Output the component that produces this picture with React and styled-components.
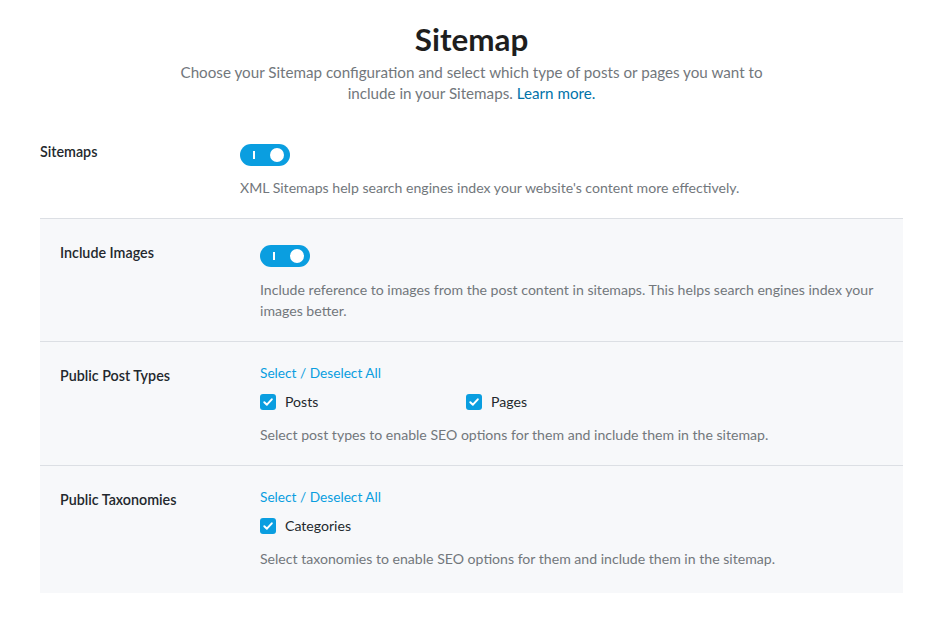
import React from "react";
import styled, { createGlobalStyle } from "styled-components";

const GlobalStyle = createGlobalStyle`
  body {
    margin: 0;
    background: #ffffff;
    font-family: "Segoe UI", "Lato", "Open Sans", sans-serif;
    color: #23282d;
  }
`;

const Page = styled.div`
  width: 863px;
  padding: 0 36px 0 40px;
`;

const Header = styled.div`
  text-align: center;
  padding-top: 21px;
  margin-bottom: 35px;
`;

const Title = styled.h1`
  margin: 0;
  font-size: 31.4px;
  font-weight: 700;
  line-height: 36px;
  color: #1e1e1e;
`;

const Lead = styled.p`
  margin: 5px auto 0;
  width: 620px;
  font-size: 15.2px;
  line-height: 21px;
  color: #72777c;
`;

const Link = styled.a`
  color: #0073aa;
  text-decoration: none;
`;

const Row = styled.div`
  display: grid;
  grid-template-columns: 200px 1fr;
  padding: ${(p) => (p.$inset ? `21px 20px ${p.$last ? "24px" : "20px"}` : "0 0 20px")};
  border-bottom: ${(p) => (p.$last ? "none" : "1px solid #dcdfe4")};
`;

const Panel = styled.div`
  background: #f7f8fa;
`;

const Label = styled.div`
  font-size: 14.3px;
  font-weight: 600;
  line-height: 20px;
  padding-top: 3px;
  color: #23282d;
`;

const Control = styled.div`
  display: flex;
  flex-direction: column;
  align-items: flex-start;
`;

const Toggle = styled.span`
  position: relative;
  display: inline-block;
  width: 50px;
  height: 22px;
  margin-top: 5px;
  border-radius: 11px;
  background: #0a9ee0;
  &::before {
    content: "";
    position: absolute;
    left: 13px;
    top: 7px;
    width: 2px;
    height: 8px;
    background: #fff;
  }
  &::after {
    content: "";
    position: absolute;
    right: 6px;
    top: 4px;
    width: 14px;
    height: 14px;
    border-radius: 50%;
    background: #fff;
  }
`;

const Help = styled.p`
  margin: ${(p) => p.$top || "12px"} 0 0;
  font-size: 14.1px;
  line-height: 21px;
  color: #72777c;
`;

const SelectAll = styled.a`
  font-size: 13.7px;
  line-height: 20px;
  color: #0a9ee0;
  text-decoration: none;
`;

const Checks = styled.div`
  display: grid;
  grid-template-columns: 206px auto;
  margin-top: 9px;
`;

const Check = styled.label`
  display: flex;
  align-items: center;
  gap: 9px;
  font-size: 14.1px;
  line-height: 20px;
  color: #23282d;
`;

const Box = styled.span`
  display: inline-flex;
  align-items: center;
  justify-content: center;
  width: 16px;
  height: 16px;
  border-radius: 3px;
  background: #0a9ee0;
`;

const Tick = () => (
  <Box>
    <svg width="12" height="12" viewBox="0 0 12 12">
      <path d="M2.3 6.2 L4.9 8.7 L9.8 3.3" fill="none" stroke="#fff" strokeWidth="2" strokeLinecap="round" strokeLinejoin="round" />
    </svg>
  </Box>
);

export default function App() {
  return (
    <Page>
      <GlobalStyle />
      <Header>
        <Title>Sitemap</Title>
        <Lead>
          Choose your Sitemap configuration and select which type of posts or pages you want to include in your Sitemaps. <Link href="#">Learn more.</Link>
        </Lead>
      </Header>

      <Row>
        <Label>Sitemaps</Label>
        <Control>
          <Toggle />
          <Help $top="11px">XML Sitemaps help search engines index your website's content more effectively.</Help>
        </Control>
      </Row>

      <Panel>
        <Row $inset>
          <Label>Include Images</Label>
          <Control>
            <Toggle />
            <Help>
              Include reference to images from the post content in sitemaps. This helps search engines index your images better.
            </Help>
          </Control>
        </Row>

        <Row $inset>
          <Label>Public Post Types</Label>
          <Control>
            <SelectAll href="#">Select / Deselect All</SelectAll>
            <Checks>
              <Check><Tick />Posts</Check>
              <Check><Tick />Pages</Check>
            </Checks>
            <Help>Select post types to enable SEO options for them and include them in the sitemap.</Help>
          </Control>
        </Row>

        <Row $inset $last>
          <Label>Public Taxonomies</Label>
          <Control>
            <SelectAll href="#">Select / Deselect All</SelectAll>
            <Checks>
              <Check><Tick />Categories</Check>
            </Checks>
            <Help>Select taxonomies to enable SEO options for them and include them in the sitemap.</Help>
          </Control>
        </Row>
      </Panel>
    </Page>
  );
}
